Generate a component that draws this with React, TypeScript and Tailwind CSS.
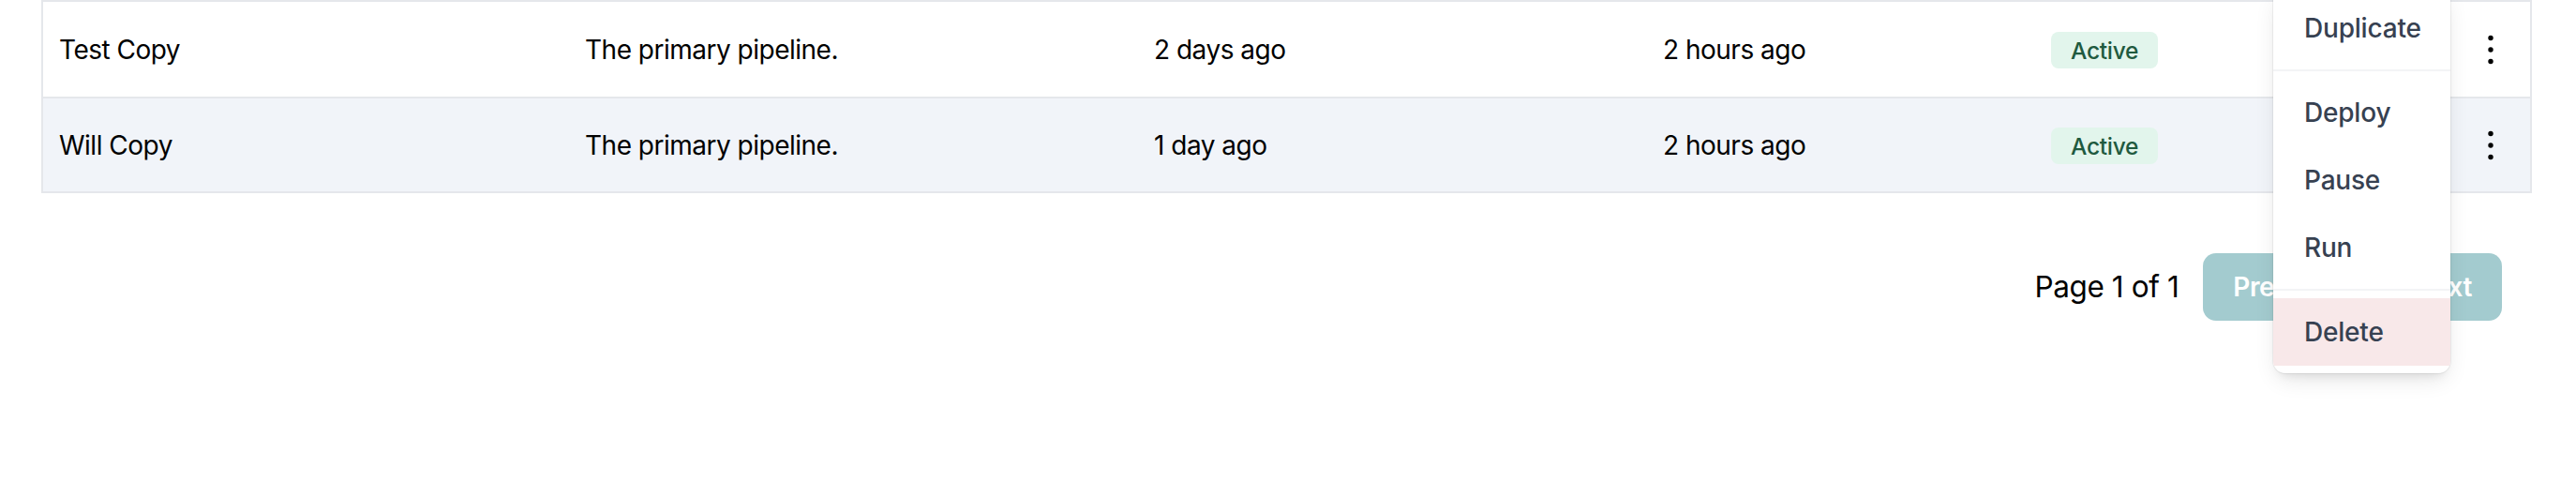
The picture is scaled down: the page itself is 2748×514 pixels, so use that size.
const rows = [
  { name: "Test Copy", description: "The primary pipeline.", created: "2 days ago", updated: "2 hours ago", status: "Active" },
  { name: "Will Copy", description: "The primary pipeline.", created: "1 day ago", updated: "2 hours ago", status: "Active" },
];

const DotsIcon = () => (
  <svg width="42" height="42" viewBox="0 0 42 42" className="block">
    <circle cx="21" cy="8.5" r="2.7" fill="#000" />
    <circle cx="21" cy="21" r="2.7" fill="#000" />
    <circle cx="21" cy="33.5" r="2.7" fill="#000" />
  </svg>
);

const MenuItem = ({ label, danger = false }: { label: string; danger?: boolean }) => (
  <div
    className={`flex h-[72px] items-center pl-[33px] text-[28px] font-medium tracking-[-0.2px] text-[#374151] ${
      danger ? "bg-[#f8e8e9]" : ""
    }`}
  >
    {label}
  </div>
);

export default function App() {
  return (
    <div className="h-[514px] w-full overflow-hidden bg-white font-['Inter',sans-serif] text-black">
      <div className="relative ml-[44px] mr-[47px]">
        {/* Table */}
        <div className="border-2 border-[#e5e7eb]">
          {rows.map((row, idx) => (
            <div
              key={row.name}
              className={`grid h-[101px] grid-cols-[561px_607px_543px_414px_1fr_84px] items-center text-[28px] tracking-[-0.5px] ${
                idx % 2 === 1 ? "border-t-2 border-[#e5e7eb] bg-[#f1f4f9]" : "bg-white"
              }`}
            >
              <div className="pl-[17px]">{row.name}</div>
              <div className="pl-[17px]">{row.description}</div>
              <div className="pl-[17px]">{row.created}</div>
              <div className="pl-[17px]">{row.updated}</div>
              <div className="pl-[17px]">
                <span className="inline-flex h-[39px] items-center rounded-[8px] bg-[#e2f5ec] px-[21px] text-[24.5px] font-medium tracking-[-0.3px] text-[#1f5a3f]">
                  {row.status}
                </span>
              </div>
              <div className="flex justify-end pr-[21px]">
                <DotsIcon />
              </div>
            </div>
          ))}
        </div>

        {/* Pagination */}
        <div className="mt-[64px] flex items-center justify-end gap-[14px] pr-[32px]">
          <span className="mr-[12px] text-[31.5px] tracking-[-0.4px]">Page 1 of 1</span>
          <button className="h-[72px] rounded-[14px] bg-[#a3cbcf] px-[32px] text-[28px] font-semibold tracking-[-0.4px] text-white">
            Previous
          </button>
          <button className="h-[72px] rounded-[14px] bg-[#a3cbcf] px-[32px] text-[28px] font-semibold tracking-[-0.4px] text-white">
            Next
          </button>
        </div>

        {/* Actions menu */}
        <div className="absolute right-[87px] top-[-14px] w-[189px] divide-y-2 divide-[#f3f4f6] overflow-hidden rounded-[13px] bg-white shadow-[0_10px_25px_-5px_rgba(0,0,0,0.12),0_8px_10px_-6px_rgba(0,0,0,0.08)] ring-1 ring-black/5">
          <div className="py-[8px]">
            <MenuItem label="Duplicate" />
          </div>
          <div className="py-[8px]">
            <MenuItem label="Deploy" />
            <MenuItem label="Pause" />
            <MenuItem label="Run" />
          </div>
          <div className="py-[8px]">
            <MenuItem label="Delete" danger />
          </div>
        </div>
      </div>
    </div>
  );
}
